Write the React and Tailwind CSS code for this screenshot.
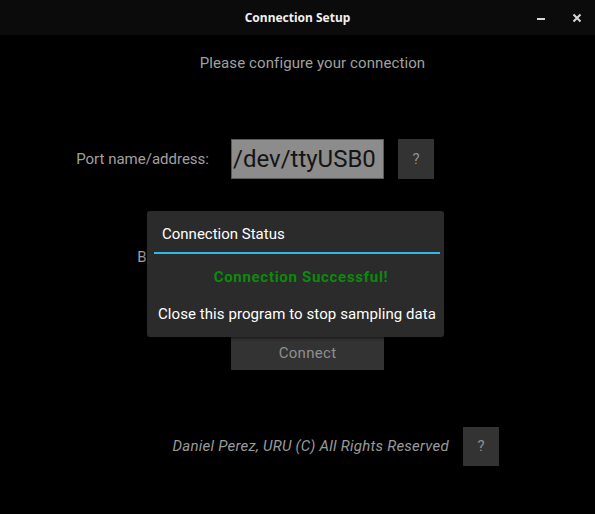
import { useState } from "react";

const HelpButton = ({ className = "" }) => (
  <button
    className={`flex items-center justify-center bg-[#333333] text-[#8f8f8f] text-[15px] shadow-[0_1px_2px_rgba(0,0,0,0.8)] ${className}`}
  >
    ?
  </button>
);

const StatusDialog = () => (
  <div className="absolute left-[147px] top-[211px] w-[297px] h-[126px] bg-[#2b2b2b] rounded-[3px] shadow-[0_0_4px_rgba(0,0,0,0.9)]">
    <div className="pl-[15px] pt-[13px] h-[41px] text-[15px] leading-[20px] text-white">
      Connection Status
    </div>
    <div className="ml-[7px] mr-[4px] h-[2px] bg-[#33b5e5]" />
    <div className="mt-[13px] pl-[11px] text-center text-[15px] leading-[20px] font-bold tracking-[0.7px] text-[#0b8a0b]">
      Connection Successful!
    </div>
    <div className="mt-[17px] pl-[3px] text-center text-[15px] leading-[20px] text-white tracking-[0.08px]">
      Close this program to stop sampling data
    </div>
  </div>
);

export default function App() {
  const [port, setPort] = useState("/dev/ttyUSB0");

  return (
    <div className="relative w-[595px] h-[514px] bg-black font-['Roboto',sans-serif] overflow-hidden">
      {/* Title bar */}
      <div className="relative h-[35px] bg-[#0b0b0b] flex items-center justify-center">
        <span className="font-['Noto_Sans',sans-serif] font-bold text-[12px] text-[#f0f0f0]">
          Connection Setup
        </span>
        <div className="absolute right-0 top-0 h-[35px] flex items-center">
          <span className="block w-[8px] h-[2px] bg-[#d8d8d8] mr-[27px] mt-[3px]" />
          <svg width="10" height="10" viewBox="0 0 10 10" className="mr-[13px]">
            <path d="M1.5 1.5 L8.5 8.5 M8.5 1.5 L1.5 8.5" stroke="#d8d8d8" strokeWidth="2" />
          </svg>
        </div>
      </div>

      <div className="pt-[19px] pl-[30px] text-center text-[15px] leading-[18px] text-[#a0a0a0] tracking-[0.1px]">
        Please configure your connection
      </div>

      {/* Port row */}
      <div className="mt-[67px] flex items-center h-[40px]">
        <div className="w-[209px] text-right text-[15px] text-[#a0a0a0]">
          Port name/address:
        </div>
        <input
          value={port}
          onChange={(e) => setPort(e.target.value)}
          className="ml-[22px] w-[153px] h-[40px] px-[1px] bg-[#8c8c8c] border border-[#5a5a5a] text-[24px] text-[#141414] outline-none"
        />
        <HelpButton className="ml-[14px] w-[36px] h-[40px]" />
      </div>

      {/* Baud row (behind dialog) */}
      <div className="mt-[58px] flex items-center h-[40px]">
        <div className="w-[209px] text-right text-[15px] text-[#a0a0a0]">
          Baud Rate:
        </div>
        <div className="ml-[22px] w-[153px] h-[40px] bg-[#333333]" />
      </div>

      {/* Connect */}
      <div className="mt-[60px] flex">
        <button className="ml-[231px] w-[153px] h-[33px] bg-[#333333] text-[15px] text-[#8f8f8f] tracking-[0.3px] shadow-[0_1px_2px_rgba(0,0,0,0.8)]">
          Connect
        </button>
      </div>

      {/* Footer */}
      <div className="mt-[57px] flex items-center justify-end pr-[96px]">
        <span className="italic text-[15px] text-[#9a9a9a] tracking-[0.25px]">
          Daniel Perez, URU (C) All Rights Reserved
        </span>
        <HelpButton className="ml-[14px] w-[36px] h-[39px]" />
      </div>

      <StatusDialog />
    </div>
  );
}
